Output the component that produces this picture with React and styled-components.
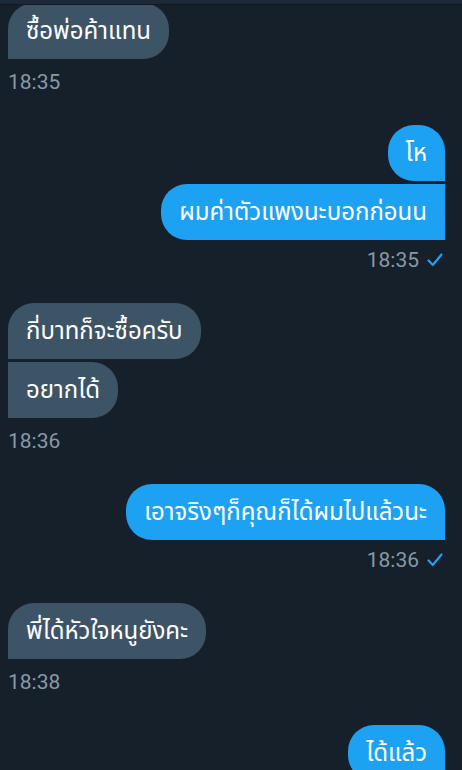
import React from "react";
import styled, { createGlobalStyle } from "styled-components";

const GlobalStyle = createGlobalStyle`
  html, body { margin: 0; padding: 0; background: #16202b; }
  * { box-sizing: border-box; }
`;

const Screen = styled.div`
  width: 462px;
  height: 770px;
  overflow: hidden;
  display: flex;
  flex-direction: column;
  background: #16202b;
  font-family: Roboto, "Noto Sans", "Noto Sans Thai", "DejaVu Sans", sans-serif;
`;

const TopBar = styled.div`
  flex: 0 0 auto;
  height: 5px;
  background: #1c2938;
  border-bottom: 1px solid #111a22;
  position: relative;
  z-index: 2;
`;

const Thread = styled.div`
  flex: 1 1 auto;
  overflow: hidden;
  padding: 0 17px 0 8px;
`;

const Scroller = styled.div`
  display: flex;
  flex-direction: column;
  margin-top: -2px;
`;

const Group = styled.div`
  display: flex;
  flex-direction: column;
  align-items: ${(p) => (p.$sent ? "flex-end" : "flex-start")};
  gap: 3px;
  margin-bottom: 31px;
`;

const R = 26;

const Bubble = styled.div`
  display: flex;
  align-items: center;
  height: 56px;
  background: ${(p) => (p.$sent ? "#1da1f2" : "#3d5466")};
  color: #ffffff;
  font-size: 24px;
  line-height: 32px;
  padding: 0 18px;
  white-space: nowrap;
  border-radius: ${(p) =>
    p.$sent
      ? `${R}px ${p.$first ? R : 0}px 0 ${R}px`
      : `${p.$first ? R : 0}px ${R}px ${R}px 0`};
`;

const Meta = styled.div`
  display: flex;
  align-items: center;
  gap: 8px;
  height: 24px;
  margin-top: ${(p) => (p.$sent ? "5px" : "8px")};
  color: #8899a6;
  font-size: 21px;
  line-height: 24px;
  padding-right: ${(p) => (p.$sent ? "2px" : "0")};
`;

const Check = () => (
  <svg width="16" height="14" viewBox="0 0 16 14" fill="none">
    <path d="M1.5 7.5 L5.8 12 L14.5 1.5" stroke="#1da1f2" strokeWidth="2.2" strokeLinecap="round" strokeLinejoin="round" />
  </svg>
);

const groups = [
  { sent: false, msgs: ["ซื้อพ่อค้าแทน"], time: "18:35" },
  { sent: true, msgs: ["โห", "ผมค่าตัวแพงนะบอกก่อนน"], time: "18:35" },
  { sent: false, msgs: ["กี่บาทก็จะซื้อครับ", "อยากได้"], time: "18:36" },
  { sent: true, msgs: ["เอาจริงๆก็คุณก็ได้ผมไปแล้วนะ"], time: "18:36" },
  { sent: false, msgs: ["พี่ได้หัวใจหนูยังคะ"], time: "18:38" },
  { sent: true, msgs: ["ได้แล้ว"], time: "18:39" },
];

export default function App() {
  return (
    <Screen>
      <GlobalStyle />
      <TopBar />
      <Thread>
        <Scroller>
          {groups.map((g, gi) => (
            <Group key={gi} $sent={g.sent}>
              {g.msgs.map((m, mi) => (
                <Bubble key={mi} $sent={g.sent} $first={mi === 0}>
                  {m}
                </Bubble>
              ))}
              <Meta $sent={g.sent}>
                <span>{g.time}</span>
                {g.sent && <Check />}
              </Meta>
            </Group>
          ))}
        </Scroller>
      </Thread>
    </Screen>
  );
}
